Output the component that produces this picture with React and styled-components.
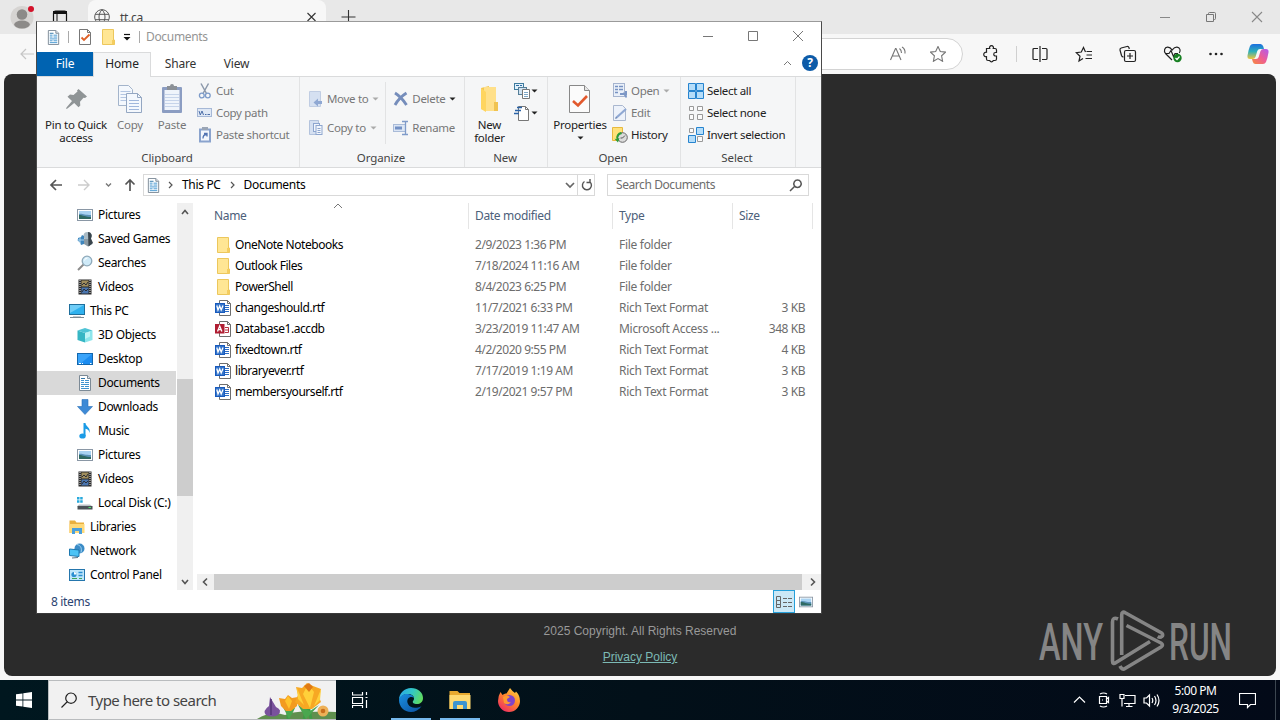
import styled, { createGlobalStyle, css } from "styled-components";

const GlobalStyle = createGlobalStyle`
  * {
    box-sizing: border-box;
  }
  body {
    margin: 0;
    overflow: hidden;
    font-family: "Noto Sans", "Open Sans", sans-serif;
    font-size: 12px;
    color: #000;
  }
  svg {
    display: block;
    flex: none;
  }
`;

/* ---------- icons ---------- */

const icons = {
  picture: (
    <>
      <rect x="0.5" y="2.5" width="15" height="11" fill="#fff" stroke="#8a97a5" />
      <rect x="2" y="4" width="12" height="8" fill="#a9d3f2" />
      <path d="M2 7c3-1 5 1 12 1v4H2z" fill="#5c93b8" />
      <path d="M2 8c4 0 6 2 12 2v2H2z" fill="#2f6a62" />
    </>
  ),
  games: (
    <>
      <circle cx="10.5" cy="5" r="4" fill="#a9bac4" />
      <path d="M7 8h6l2.500 5-4.500 2.500-4-2.500z" fill="#8a9aa4" />
      <path d="M11 1a4 4 0 0 1 3 6.500L16 12l-4.500 3.500z" fill="#39454d" />
      <path d="M1 7l3-1 1-2 2 1v8l-3 1-1-3-2-1z" fill="#3f86bd" />
      <path d="M0 9h7M3 6v6" stroke="#a7d0ec" />
    </>
  ),
  search: (
    <>
      <path d="M1 15l5.500-5.500" stroke="#8c8c8c" strokeWidth="2" />
      <circle cx="10" cy="6" r="4.800" fill="#cfeaf8" stroke="#8fa9ba" strokeWidth="1.300" />
      <path d="M7.500 5.500a3 3 0 0 1 3-2.500" stroke="#fff" fill="none" />
    </>
  ),
  video: (
    <>
      <rect x="1.500" y="0.500" width="13" height="15" fill="#2b2b2b" />
      <path d="M3 1v14M13 1v14" stroke="#eee" strokeDasharray="1 1" />
      <rect x="4.500" y="1.500" width="7" height="6" fill="#a08d5c" />
      <rect x="4.500" y="8.500" width="7" height="6" fill="#4a76b0" />
      <path d="M5 6l2-2 2 2 2-3M5 13l2-3 2 2 2-2" stroke="#2b2f38" fill="none" />
    </>
  ),
  pc: (
    <>
      <rect x="0.500" y="1.500" width="15" height="10" fill="#2fb1ee" stroke="#1f6f9c" />
      <path d="M1 2h14L1 10z" fill="#6fcdf7" />
      <path d="M4 13.500h8" stroke="#c3cbd1" />
      <path d="M1 14.500h14" stroke="#7d8a93" />
    </>
  ),
  cube: (
    <>
      <path d="M0.500 3.500L8 6v9.500L0.500 13z" fill="#36b6c4" />
      <path d="M8 6l7.500-2.500V13L8 15.500z" fill="#8de6ec" />
      <path d="M0.500 3.500L8 1l7.500 2.500L8 6z" fill="#4fc4d6" />
      <path d="M8 6l5-1.600v5L8 12z" fill="#c0f5f7" />
    </>
  ),
  desktop: (
    <>
      <rect x="0.500" y="2.500" width="15" height="11" fill="#1b8cf0" stroke="#1367ad" />
      <path d="M1 3h14L3 13H1z" fill="#3aa4fa" />
      <path d="M2 12.500h2M5 12.500h1M13 12.500h1.500" stroke="#fff" />
    </>
  ),
  document: (
    <>
      <path d="M2.500 0.500h8l3 3v12h-11z" fill="#fff" stroke="#7c8a96" />
      <path d="M10.500 0.500v3h3" fill="#dfe6ec" stroke="#7c8a96" />
      <path d="M4 5.500h3M8 5.500h4M4 7.500h3M8 7.500h4M4 9.500h8M4 11.500h3M8 11.500h4M4 13.500h8" stroke="#3f93cf" />
      <path d="M4 3.500h4" stroke="#2f75a8" />
    </>
  ),
  download: <path d="M5 0.500h6v7h4.500L8 15.500 0.500 7.500H5z" fill="#3d8ad6" stroke="#2a70b8" strokeWidth="0.600" />,
  music: (
    <>
      <path d="M6.500 0h2c0 3.500 5.500 4.500 4 10-.3-2.800-1.800-4-4-4.300V13h-2z" fill="#1a9be6" />
      <ellipse cx="5.500" cy="13" rx="3.200" ry="2.600" fill="#1a9be6" />
    </>
  ),
  disk: (
    <>
      <path d="M0 2h2.500v2.500H0zM3.200 2h2.500v2.500H3.200zM0 5.200h2.500v2.500H0zM3.200 5.200h2.500v2.500H3.200z" fill="#27a9dc" />
      <path d="M2 9.500h11l2.500 2H0z" fill="#b9c0c5" />
      <rect x="0.500" y="11" width="15" height="3.500" fill="#4b5257" />
      <rect x="11.500" y="12" width="2.500" height="1" fill="#4fe36a" />
    </>
  ),
  libraries: (
    <>
      <path d="M0.500 1.500h5.500l1.500 2h7.500V14H0.500z" fill="#e9b03f" />
      <rect x="0.500" y="5" width="15" height="9" fill="#ffd978" />
      <path d="M3 15V9h10v6h-3v-3H6v3z" fill="#4a9fdb" />
    </>
  ),
  network: (
    <>
      <circle cx="10.500" cy="5.500" r="5" fill="#3b8cc7" />
      <path d="M8 1.500c4 1 5 4 4 8" stroke="#a7d6f1" fill="none" />
      <path d="M0.500 6l9.500 1v6.500l-9.500-1z" fill="#4cc3f5" stroke="#1c78b0" />
      <path d="M3 15l6-.5" stroke="#5b7486" />
    </>
  ),
  control: (
    <>
      <rect x="0.500" y="2.500" width="15" height="11" fill="#bfe6fb" stroke="#2576ad" />
      <circle cx="5" cy="7.500" r="2.600" fill="#2c8fd1" />
      <path d="M5 7.500V4.900a2.600 2.600 0 0 1 2.600 2.600z" fill="#fff" />
      <path d="M9.500 5.500h4M9.500 8.500h4" stroke="#2c8fd1" strokeWidth="1.500" />
      <path d="M3 11.500h5M10 11.500h3" stroke="#41a35a" />
    </>
  ),
  folder: (
    <>
      <path d="M2.500 0.500h11v10.500h1v4.500h-12z" fill="#ffe694" stroke="#ecc75c" />
      <path d="M12 11h2.500v4.500H12z" fill="#f5cd5f" />
    </>
  ),
  word: (
    <>
      <path d="M4.500 0.500h8l3 3v12h-11z" fill="#fff" stroke="#6e6e6e" />
      <path d="M12.500 0.500v3h3" fill="none" stroke="#6e6e6e" />
      <path d="M10 5.500h4M10 7.500h4M10 9.500h4M10 11.500h4" stroke="#2b6cc4" />
      <rect x="0.500" y="3.500" width="9" height="9" fill="#3474c9" stroke="#185abd" />
      <path d="M1.800 5.500l1.200 4.500 1.700-4 1.500 4L8 5.500" stroke="#fff" fill="none" strokeWidth="1.300" />
    </>
  ),
  access: (
    <>
      <path d="M4.500 0.500h8l3 3v12h-11z" fill="#fff" stroke="#6e6e6e" />
      <path d="M12.500 0.500v3h3" fill="none" stroke="#6e6e6e" />
      <path d="M10 6.500h3.500v5H10M10 9h3" stroke="#b5303f" fill="none" />
      <rect x="0" y="3" width="9.500" height="9.500" fill="#b01e33" />
      <path d="M2.500 10.500l2.200-5.500 2.200 5.500M3.300 8.700h3" stroke="#fff" fill="none" strokeWidth="1.300" />
    </>
  ),
  check: (
    <>
      <path d="M2.500 0.500h8l3 3v12h-11z" fill="#fff" stroke="#777" />
      <path d="M10.500 0.500v3h3" fill="none" stroke="#777" />
      <path d="M4.500 8.500L7 11l5.500-5.500" stroke="#df6128" fill="none" strokeWidth="1.800" />
    </>
  ),
  cut: (
    <>
      <path d="M4 0.500l5.500 10M11.500 0.500L6 10.500" stroke="#8c99ab" strokeWidth="1.500" />
      <circle cx="4.800" cy="12.500" r="2.400" fill="none" stroke="#7d9bc9" strokeWidth="1.300" />
      <circle cx="10.800" cy="12.500" r="2.400" fill="none" stroke="#7d9bc9" strokeWidth="1.300" />
    </>
  ),
  copyPath: (
    <>
      <rect x="0.500" y="3.500" width="14" height="8" fill="#dfe8f5" stroke="#a6b8d6" />
      <path d="M2 6l1.300 4L5 6l1.500 4M8 9.500h1.500M10.500 9.500H13" stroke="#4c6ea8" fill="none" />
    </>
  ),
  pasteLink: (
    <>
      <rect x="2" y="1.500" width="12" height="14" fill="#8aa3cd" />
      <rect x="4" y="3.500" width="8" height="10" fill="#f4f7fd" />
      <rect x="5" y="0" width="6" height="3" fill="#9aa5b5" />
      <path d="M6 11.500c0-3 1-4 3.500-4M7 6.500h3v3" stroke="#5374b3" fill="none" strokeWidth="1.300" />
    </>
  ),
  moveTo: (
    <>
      <path d="M1.500 0.500h11v15h-11z" fill="#d5e0f1" stroke="#c0cde3" />
      <path d="M14 10h-4V7.500L5.500 11.500l4.500 4V13h4z" fill="#8fa8d3" />
    </>
  ),
  copyTo: (
    <>
      <path d="M1.500 0.500h9v14h-9z" fill="#d5e0f1" stroke="#b3c3dd" />
      <rect x="5.500" y="3.500" width="6" height="8" fill="#f2f6fc" stroke="#8ea6cf" />
      <rect x="8" y="5.500" width="6" height="9" fill="#f2f6fc" stroke="#8ea6cf" />
      <path d="M9.500 8.500h3M9.500 10.500h3M9.500 12.500h3" stroke="#8ea6cf" />
    </>
  ),
  remove: <path d="M2 2c4 2.500 8 6.500 11.500 12M13.500 2c-4 2.500-8.500 6.500-11.500 12" stroke="#758dbb" strokeWidth="2.800" fill="none" />,
  rename: (
    <>
      <rect x="0.500" y="4.500" width="12" height="7" fill="#dbe5f4" stroke="#a9bbd8" />
      <rect x="2" y="6.500" width="7" height="3" fill="#7391c5" />
      <path d="M9 1.500h6M12.500 1.500v13M9 14.500h6" stroke="#7f9bc9" strokeWidth="1.300" />
    </>
  ),
  easyAccess: (
    <>
      <rect x="0.500" y="0.500" width="9" height="6" fill="#e3f1fb" stroke="#3f7c9f" />
      <path d="M2 2.500h3M6 2.500h2" stroke="#2d6ea5" />
      <rect x="4.500" y="4.500" width="8" height="7" fill="#cfe2f1" stroke="#557e98" />
      <path d="M8.500 6.500h7v9h-7z" fill="#fff" stroke="#777" />
      <path d="M10 9.500h4M10 11.500h4M10 13.500h4" stroke="#7ea7c6" />
    </>
  ),
  newItem: (
    <>
      <path d="M4.500 1.500h7l3 3v11h-10z" fill="#fff" stroke="#777" />
      <path d="M11.500 1.500v3h3" fill="none" stroke="#777" />
      <path d="M3 2.500h5M1 5.500h6M0 8.500h5" stroke="#2a63a7" strokeWidth="1.400" />
    </>
  ),
  open: (
    <>
      <rect x="1.500" y="0.500" width="11" height="13" fill="#eaf0f9" stroke="#a5b4cf" />
      <path d="M3 3.500h3M7 3.500h4M3 6.500h3M7 6.500h4M3 9.500h3" stroke="#7792c2" strokeWidth="1.500" />
      <path d="M14 14.500c0-3-1.500-4-3-4M8 11h6v-3" stroke="#7c97c6" strokeWidth="2" fill="none" />
    </>
  ),
  edit: (
    <>
      <path d="M1.500 0.500h9l3 3v12h-12z" fill="#edf2fa" stroke="#a9b7cf" />
      <path d="M4 13L14 4" stroke="#8fa8d3" strokeWidth="2.200" />
      <path d="M3 14l1-2 1 1z" fill="#58709b" />
    </>
  ),
  history: (
    <>
      <path d="M0.500 0.500h10v13h-10z" fill="#ffe17a" stroke="#e7b93e" />
      <circle cx="10.500" cy="10.500" r="4.800" fill="#dcdcdc" stroke="#686868" />
      <path d="M10.500 11l2.500-2.500M10.500 11H8.500" stroke="#555" />
      <path d="M9 5a5.500 5.500 0 0 0-4.500 7l-2-.2 3.500 3.700 1.500-4.500-1.500.5C6.500 8 8 7.500 10 7z" fill="#2b9c3a" />
    </>
  ),
  selectAll: (
    <path
      d="M0.500 0.500h7v7h-7zM8.500 0.500h7v7h-7zM0.500 8.500h7v7h-7zM8.500 8.500h7v7h-7z"
      fill="#b5ddf9"
      stroke="#2684cf"
    />
  ),
  selectNone: <path d="M1.500 1.500h4v4h-4zM9.500 1.500h5v4h-5zM1.500 9.500h4v5h-4zM9.500 9.500h5v5h-5z" fill="#fbfbfb" stroke="#999" />,
  invert: (
    <>
      <path d="M1.500 1.500h4v4h-4zM9.500 9.500h5v5h-5z" fill="#fbfbfb" stroke="#999" />
      <path d="M8.500 0.500h7v7h-7zM0.500 8.500h7v7h-7z" fill="#b5ddf9" stroke="#2684cf" />
    </>
  ),
};

const Icon = ({ name, size = 16 }) => (
  <svg width={size} height={size} viewBox="0 0 16 16" fill="none">
    {icons[name]}
  </svg>
);

const Stroke = ({ d, w = 16, h = w, color = "#555", width = 1.2, children }) => (
  <svg width={w} height={h} viewBox={`0 0 ${w} ${h}`} fill="none" stroke={color} strokeWidth={width}>
    <path d={d} />
    {children}
  </svg>
);

const Caret = ({ color = "#222" }) => (
  <svg width="7" height="4" viewBox="0 0 7 4">
    <path d="M0.500 0.500h6L3.500 3.500z" fill={color} />
  </svg>
);

const PinIcon = () => (
  <svg width="24" height="24" viewBox="0 0 24 24" fill="#8f9496">
    <path d="M14.500 2L23 9.500l-2 1.500-1.500-.3-3.500 4 .3 3.800-1.800 1.800-4.300-4.300L3.500 21.500 2 22 2.500 20.500l5.500-6.500L3.500 9.800 6 7.500l3.500.6L13.500 4.500 13 3.500z" />
  </svg>
);

const CopyIcon = () => (
  <svg width="26" height="32" viewBox="0 0 26 32" fill="none">
    <path d="M1.500 2.500h10l4 4v16h-14z" fill="#f4f8fd" stroke="#a3b4cb" />
    <path d="M3.500 8.500h10M3.500 11.500h10M3.500 14.500h10M3.500 17.500h10" stroke="#b4c6e2" />
    <path d="M9.500 10.500h11l4 4v15h-15z" fill="#f4f8fd" stroke="#94a7c2" />
    <path d="M20.500 10.500v4h4" stroke="#94a7c2" />
    <path d="M12 17.500h10M12 20.500h10M12 23.500h10M12 26.500h10" stroke="#a0b7dc" />
  </svg>
);

const PasteIcon = () => (
  <svg width="24" height="32" viewBox="0 0 24 32" fill="none">
    <rect x="2" y="4" width="20" height="26" rx="1" fill="#8b9dc2" />
    <rect x="4.500" y="7" width="15" height="20" fill="#eff4fb" />
    <path d="M5 11.500h14M5 14.500h14M5 17.500h14M5 20.500h14M5 23.500h14" stroke="#c6d4ea" />
    <path d="M7 3h3a2 2 0 0 1 4 0h3v4H7z" fill="#8b9096" />
  </svg>
);

const NewFolderIcon = () => (
  <svg width="20" height="28" viewBox="0 0 20 28">
    <path d="M1 3l8-2v25l-8-2z" fill="#f2c750" />
    <path d="M4 2h12v15l2 2v7H4z" fill="#ffe08a" />
    <path d="M1 3l5 4v20l-5-3z" fill="#ffd55f" />
    <path d="M14 17h4v9h-4z" fill="#f0c351" />
  </svg>
);

const PropertiesIcon = () => (
  <svg width="22" height="30" viewBox="0 0 22 30" fill="none">
    <path d="M0.500 1.500h15l5 5v22h-20z" fill="#fbfbfb" stroke="#888" />
    <path d="M15.500 1.500v5h5" fill="#e6e6e6" stroke="#888" />
    <path d="M4 17l5 4.500L18 12" stroke="#e2592d" strokeWidth="2.600" />
  </svg>
);

/* ---------- browser ---------- */

const Screen = styled.div`
  position: relative;
  width: 1280px;
  height: 720px;
  display: flex;
  flex-direction: column;
  overflow: hidden;
  background: #f7f7f7;
`;

const TabStrip = styled.div`
  height: 34px;
  display: flex;
  align-items: center;
  background: #e8e8e8;
`;

const Profile = styled.div`
  width: 52px;
  padding-left: 10px;
`;

const BrowserTab = styled.div`
  width: 238px;
  height: 34px;
  margin-left: 20px;
  padding: 0 7px 0 6px;
  display: flex;
  align-items: center;
  gap: 10px;
  border-radius: 8px 8px 0 0;
  background: #f7f7f7;
  color: #444;
  letter-spacing: -0.3px;
  span {
    flex: 1;
  }
`;

const WindowButtons = styled.div`
  margin-left: auto;
  display: flex;
  gap: 30px;
  padding-right: 15px;
`;

const Toolbar = styled.div`
  height: 40px;
  display: flex;
  align-items: center;
  padding: 0 2px 0 18px;
`;

const UrlBar = styled.div`
  width: 901px;
  height: 32px;
  margin-left: 28px;
  padding-right: 16px;
  display: flex;
  align-items: center;
  justify-content: flex-end;
  gap: 23px;
  border: 1px solid #d3d3d3;
  border-radius: 16px;
  background: #fff;
`;

const ToolbarIcons = styled.div`
  margin-left: auto;
  display: grid;
  grid-template-columns: 26px 14px repeat(5, 44px) 40px;
  place-items: center;
`;

const ToolbarLine = styled.i`
  width: 1px;
  height: 16px;
  margin-left: 10px;
  background: #d0d0d0;
`;

const Page = styled.main`
  height: 602px;
  margin: 0 4px 4px;
  padding-bottom: 11px;
  display: flex;
  flex-direction: column;
  justify-content: flex-end;
  align-items: center;
  gap: 10px;
  border-radius: 8px;
  background: #2b2b2b;
  color: #999;
  font: 12px/16px "Liberation Sans", Arial, sans-serif;
  a {
    color: #7cbab5;
    text-decoration: underline;
  }
`;

const Watermark = styled.div`
  position: absolute;
  left: 1036px;
  top: 608px;
`;

/* ---------- explorer ---------- */

const Explorer = styled.section`
  position: absolute;
  left: 36px;
  top: 21px;
  width: 786px;
  height: 593px;
  display: flex;
  flex-direction: column;
  border: 1px solid;
  border-color: #9a9a9a #4a4a4a #3a3a3a;
  background: #fff;
  letter-spacing: -0.33px;
  line-height: 16px;
  white-space: nowrap;
`;

const TitleBar = styled.header`
  height: 30px;
  padding: 0 17px 0 9px;
  display: flex;
  align-items: center;
  color: #959595;
`;

const QuickAccess = styled.div`
  display: flex;
  align-items: center;
  gap: 7px;
  margin-right: 5px;
`;

const Rule = styled.i`
  width: 1px;
  height: 12px;
  margin-right: 1px;
  background: #aaa;
`;

const CaptionButtons = styled.div`
  margin: 0 0 4px auto;
  display: flex;
  gap: 33px;
`;

const Tabs = styled.nav`
  height: 25px;
  display: flex;
  align-items: stretch;
  border-bottom: 1px solid #dadbdc;
`;

const Tab = styled.div`
  width: ${({ $width }) => $width}px;
  display: flex;
  align-items: center;
  justify-content: center;
  color: #333;
  letter-spacing: -0.15px;
  ${({ $kind }) =>
    $kind === "file" &&
    css`
      background: #0063b1;
      color: #fff;
    `}
  ${({ $kind }) =>
    $kind === "active" &&
    css`
      margin-bottom: -1px;
      padding-bottom: 2px;
      border: 1px solid #dadbdc;
      border-bottom: 0;
      background: #f5f6f7;
      color: #222;
    `}
`;

const TabsEnd = styled.div`
  margin-left: auto;
  padding: 0 3px 2px 0;
  display: flex;
  align-items: center;
  gap: 10px;
`;

const HelpBadge = styled.span`
  width: 16px;
  height: 16px;
  border-radius: 50%;
  background: #0d5ba8;
  color: #fff;
  font-weight: 700;
  text-align: center;
`;

const Ribbon = styled.div`
  height: 91px;
  display: flex;
  border-bottom: 1px solid #dadbdc;
  background: #f5f6f7;
  font-size: 11.5px;
  letter-spacing: -0.32px;
`;

const Group = styled.div`
  width: ${({ $width }) => $width}px;
  padding: 3px 0 1px;
  display: flex;
  flex-direction: column;
  border-right: 1px solid #e2e3e4;
`;

const GroupBody = styled.div`
  flex: 1;
  display: flex;
  padding-left: ${({ $pad }) => $pad || 0}px;
`;

const GroupName = styled.div`
  padding-right: 2px;
  text-align: center;
  color: #444;
  letter-spacing: -0.1px;
`;

const BigButton = styled.div`
  width: ${({ $width }) => $width}px;
  padding-top: 2px;
  display: flex;
  flex-direction: column;
  align-items: center;
  color: ${({ $disabled }) => ($disabled ? "#777" : "#222")};
  line-height: 13px;
  letter-spacing: -0.25px;
  text-align: center;
  white-space: pre;
  .pic {
    height: 33px;
    margin-bottom: 3px;
    display: flex;
    align-items: center;
  }
  span + svg {
    margin-top: 5px;
  }
`;

const Commands = styled.div`
  display: flex;
  flex-direction: column;
  padding: ${({ $top }) => $top || 0}px 0 0 ${({ $left }) => $left || 0}px;
`;

const Command = styled.div`
  height: ${({ $height }) => $height || 22}px;
  display: flex;
  align-items: center;
  gap: 3px;
  color: ${({ $disabled }) => ($disabled ? "#777" : "#222")};
  svg + svg {
    margin-left: ${({ $tight }) => ($tight ? -2 : 1)}px;
  }
`;

const Separator = styled.i`
  width: 1px;
  height: 62px;
  margin: 2px 7px 0 6px;
  background: #e2e3e4;
`;

const AddressRow = styled.div`
  height: 35px;
  padding: 0 12px 1px;
  display: flex;
  align-items: center;
`;

const NavArrows = styled.div`
  width: 94px;
  display: flex;
  align-items: center;
  gap: 14px;
  svg:last-child {
    margin-left: -2px;
  }
`;

const Box = styled.div`
  width: ${({ $width }) => $width}px;
  height: 22px;
  padding: 0 5px 0 2px;
  display: flex;
  align-items: center;
  gap: 9px;
  border: 1px solid #d9d9d9;
  svg:first-child {
    margin-right: -2px;
  }
  &:last-child {
    margin-left: 12px;
    padding: 0 6px 0 8px;
    justify-content: space-between;
    color: #6d6d6d;
    letter-spacing: -0.42px;
  }
`;

const BoxEnd = styled.div`
  height: 20px;
  margin: 0 -5px 0 auto;
  display: flex;
  align-items: center;
  gap: 2px;
  svg:first-child {
    margin-right: 0;
  }
  i {
    width: 1px;
    height: 20px;
    background: #d9d9d9;
  }
`;

const Body = styled.div`
  height: 387px;
  display: flex;
`;

const Tree = styled.ul`
  width: 139px;
  margin: 0;
  padding: 0;
  list-style: none;
`;

const TreeItem = styled.li`
  height: 24px;
  padding-left: ${({ $level }) => 24 + $level * 8}px;
  display: flex;
  align-items: center;
  gap: 5px;
  background: ${({ $selected }) => ($selected ? "#d9d9d9" : "none")};
`;

const VerticalScroll = styled.div`
  width: 16px;
  margin-left: 1px;
  padding-top: 6px;
  display: flex;
  flex-direction: column;
  align-items: center;
  background: #f0f0f0;
  i {
    width: 16px;
    height: 117px;
    margin: 164px 0 83px;
    background: #cdcdcd;
  }
`;

const Files = styled.div`
  flex: 1;
  margin-left: 4px;
  display: flex;
  flex-direction: column;
`;

const columns = css`
  display: grid;
  grid-template-columns: 272px 144px 120px 80px;
  align-items: center;
`;

const HeaderRow = styled.div`
  ${columns}
  height: 26px;
  margin-bottom: 5px;
  color: #4c607a;
  > div {
    position: relative;
    height: 26px;
    padding-left: 6px;
    line-height: 26px;
    border-right: 1px solid #e5e5e5;
  }
  > div:first-child {
    padding-left: 17px;
  }
`;

const SortMark = styled.span`
  position: absolute;
  left: 136px;
  top: 0;
`;

const FileRow = styled.div`
  ${columns}
  height: 21px;
  color: #6d6d6d;
  letter-spacing: -0.45px;
  > span {
    padding-left: 6px;
  }
  > span:last-child {
    padding-right: 8px;
    text-align: right;
  }
`;

const FileType = styled.span`
  letter-spacing: -0.3px;
`;

const FileName = styled.div`
  padding-left: 18px;
  display: flex;
  align-items: center;
  gap: 4px;
  color: #000;
`;

const HorizontalScroll = styled.div`
  height: 16px;
  margin-top: auto;
  display: flex;
  align-items: center;
  background: #f0f0f0;
  i {
    width: 588px;
    height: 16px;
    margin: 0 7px 0 5px;
    background: #cdcdcd;
  }
`;

const StatusBar = styled.footer`
  height: 23px;
  padding: 0 4px 0 14px;
  display: flex;
  align-items: center;
  justify-content: space-between;
  color: #2b4371;
`;

const ViewButtons = styled.div`
  display: flex;
`;

const ViewButton = styled.div`
  width: 22px;
  height: 23px;
  display: grid;
  place-items: center;
  border: 1px solid ${({ $active }) => ($active ? "#26a0da" : "transparent")};
  background: ${({ $active }) => ($active ? "#cbe8f6" : "none")};
`;

/* ---------- taskbar ---------- */

const Taskbar = styled.div`
  height: 40px;
  display: flex;
  background: linear-gradient(90deg, #00171f, #021019 50%, #030a18);
  color: #fff;
`;

const TaskButton = styled.div`
  width: ${({ $width }) => $width}px;
  display: grid;
  place-items: center;
  position: relative;
  &::after {
    content: "";
    position: absolute;
    bottom: 0;
    width: 40px;
    height: 2px;
    background: ${({ $running }) => ($running ? "#76b9ed" : "none")};
  }
`;

const SearchBox = styled.div`
  width: 288px;
  padding-left: 12px;
  display: flex;
  align-items: center;
  border: 1px solid #b9bcbe;
  border-right: 0;
  background: #f1f1f1;
  color: #444;
  font-size: 15px;
  letter-spacing: -0.52px;
  span {
    flex: 1;
    margin-left: 11px;
  }
`;

const Tray = styled.div`
  margin-left: auto;
  display: flex;
  align-items: center;
  gap: 7px;
`;

const Clock = styled.div`
  width: 57px;
  margin-right: 8px;
  font-size: 12px;
  line-height: 18px;
  letter-spacing: -0.45px;
  text-align: center;
  white-space: nowrap;
`;

const DesktopEdge = styled.i`
  width: 5px;
  height: 40px;
  margin-left: 12px;
  border-left: 1px solid #3c4650;
`;

const tree = [
  ["picture", "Pictures", 2],
  ["games", "Saved Games", 2],
  ["search", "Searches", 2],
  ["video", "Videos", 2],
  ["pc", "This PC", 1],
  ["cube", "3D Objects", 2],
  ["desktop", "Desktop", 2],
  ["document", "Documents", 2, true],
  ["download", "Downloads", 2],
  ["music", "Music", 2],
  ["picture", "Pictures", 2],
  ["video", "Videos", 2],
  ["disk", "Local Disk (C:)", 2],
  ["libraries", "Libraries", 1],
  ["network", "Network", 1],
  ["control", "Control Panel", 1],
];

const files = [
  ["folder", "OneNote Notebooks", "2/9/2023 1:36 PM", "File folder", ""],
  ["folder", "Outlook Files", "7/18/2024 11:16 AM", "File folder", ""],
  ["folder", "PowerShell", "8/4/2023 6:25 PM", "File folder", ""],
  ["word", "changeshould.rtf", "11/7/2021 6:33 PM", "Rich Text Format", "3 KB"],
  ["access", "Database1.accdb", "3/23/2019 11:47 AM", "Microsoft Access ...", "348 KB"],
  ["word", "fixedtown.rtf", "4/2/2020 9:55 PM", "Rich Text Format", "4 KB"],
  ["word", "libraryever.rtf", "7/17/2019 1:19 AM", "Rich Text Format", "3 KB"],
  ["word", "membersyourself.rtf", "2/19/2021 9:57 PM", "Rich Text Format", "3 KB"],
];

const star = "M8 0.500l2.300 5 5.200.6-3.900 3.700 1 5.500L8 12.600l-4.600 2.700 1-5.500L.5 6.100l5.200-.6z";

const Browser = () => (
  <>
    <TabStrip>
      <Profile>
        <svg width="26" height="26" viewBox="0 0 26 26">
          <circle cx="12" cy="13.500" r="11.500" fill="#d6d4d2" />
          <circle cx="12" cy="10.500" r="5.300" fill="#8c8a88" />
          <ellipse cx="12" cy="20.500" rx="7.800" ry="4" fill="#8c8a88" />
          <circle cx="21" cy="5" r="3" fill="#d3122a" />
        </svg>
      </Profile>
      <svg width="16" height="16" viewBox="0 0 16 16" fill="none" stroke="#111">
        <rect x="1.500" y="2" width="13" height="13" rx="2" strokeWidth="1.200" />
        <path d="M1 3.500h14" strokeWidth="3" />
        <path d="M5 4v11" />
      </svg>
      <BrowserTab>
        <Stroke d="M8 .7a7.300 7.300 0 1 0 .01 0zM8 .7c-4 4-4 10.600 0 14.600M8 .7c4 4 4 10.600 0 14.600M1.300 5.300h13.400M1.300 10.700h13.400" color="#555" width={1} />
        <span>tt.ca</span>
        <Stroke w={14} d="M2.500 3l8 8M10.500 3l-8 8" color="#333" width={1.100} />
      </BrowserTab>
      <Stroke w={45} h={16} d="M22.500 1v14M15.500 8h14" color="#333" width={1.100} />
      <WindowButtons>
        <Stroke d="M3 8.500h10" color="#888" width={1} />
        <Stroke d="M3.500 5.500h7v7h-7zM5.500 5V4.500q0-1 1-1h5q1 0 1 1v5q0 1-1 1H11" color="#777" width={1} />
        <Stroke d="M3 3l10 10M13 3L3 13" color="#888" width={1.100} />
      </WindowButtons>
    </TabStrip>
    <Toolbar>
      <Stroke d="M17 8H3M8 3L3 8l5 5" color="#c5c5c5" />
      <UrlBar>
        <Stroke w={18} h={16} d="M1.500 14L6.500 2.500h.5L12 14M3.500 10h6.500M10.500 2.500q2 1.500 2 4.500M13 1q3.500 2 3 6.500" color="#767676" width={1.100} />
        <Stroke d={star} color="#767676" width={1.100} />
      </UrlBar>
      <ToolbarIcons>
        <Stroke
          w={18}
          color="#222"
          d="M4.500 3.500h3.200a2 2 0 1 1 3.600 0H13q1.500 0 1.500 1.500v2.500h-1a1.700 1.700 0 1 0 0 3.500h1V14q0 1.500-1.500 1.500h-1.700a1.900 1.900 0 0 1-3.600 0H6q-1.500 0-1.500-1.500v-2.300a2.300 2.300 0 1 1 0-4.500z"
        />
        <ToolbarLine />
        <Stroke w={18} h={16} color="#222" d="M7 2.500H3q-1 0-1 1v9q0 1 1 1h4M11 2.500h4q1 0 1 1v9q0 1-1 1h-4M9 0v16" />
        <Stroke w={18} color="#222" d="M10.500 7L8.500 2.500 6.300 7l-5 .7 3.700 3.500L4 16l4-2.400M11.500 6.500H17M11.500 10H17M10.500 13.500H17" />
        <Stroke w={20} h={18} color="#222" d="M5.500 12q-1.500 0-2-1.500L2 5q-.3-1.500 1.200-2L9 1.500q1.500-.3 2 1.200l.3 1.300M8 5.500h8q1.500 0 1.500 1.500v8q0 1.500-1.500 1.500H8Q6.500 16.500 6.500 15V7Q6.500 5.500 8 5.500zM12 8v6M9 11h6" />
        <Stroke w={19} h={18} color="#222" d="M9 15L2.500 8.500C.5 6 1.500 2.500 4.500 2.200 7 2 8.500 4 9.200 5 10 4 11.500 2 14 2.200c3 .3 4 3.500 2.300 5.800M2 8.500h4l2-3 2.500 6 1.500-3h3">
          <circle cx="14.500" cy="13" r="4.200" fill="#178022" stroke="none" />
          <path d="M12.500 13l1.500 1.500 2.500-3" stroke="#fff" />
        </Stroke>
        <svg width="18" height="16" viewBox="0 0 18 16" fill="#222">
          <circle cx="3.500" cy="8" r="1.300" />
          <circle cx="9" cy="8" r="1.300" />
          <circle cx="14.500" cy="8" r="1.300" />
        </svg>
        <svg width="22" height="22" viewBox="0 0 22 22">
          <defs>
            <linearGradient id="cpA" x1="0" y1="0" x2="0" y2="1">
              <stop offset="0" stopColor="#1b6fe0" />
              <stop offset="0.500" stopColor="#2fb0b8" />
              <stop offset="1" stopColor="#f2c63c" />
            </linearGradient>
            <linearGradient id="cpB" x1="1" y1="0" x2="0" y2="1">
              <stop offset="0" stopColor="#b05bf0" />
              <stop offset="0.500" stopColor="#ee5d94" />
              <stop offset="1" stopColor="#f78a3c" />
            </linearGradient>
          </defs>
          <path d="M6 1h7.500q2 0 2.800 2.500l.7 2.500h-4q-2 0-2.700 2L8.500 14q-.8 2-3 2H3q-3 0-2.500-3.500Q1.500 6.500 3 3 4 1 6 1z" fill="url(#cpA)" />
          <path d="M16 21H8.500q-2 0-2.800-2.500L5 16h4q2 0 2.700-2L13.500 8q.8-2 3-2H19q3 0 2.500 3.500Q20.500 15.500 19 19q-1 2-3 2z" fill="url(#cpB)" />
        </svg>
      </ToolbarIcons>
    </Toolbar>
    <Page>
      <div>2025 Copyright. All Rights Reserved</div>
      <a>Privacy Policy</a>
    </Page>
    <Watermark>
      <svg width="242" height="66" viewBox="0 0 242 66" fill="none" stroke="#858585" strokeWidth="3.600" strokeLinejoin="round">
        <g fill="#858585" stroke="none" fontFamily="Roboto" fontWeight="500" fontSize="51">
          <text x="3" y="51.500" textLength="64" lengthAdjust="spacingAndGlyphs">ANY</text>
          <text x="133" y="51.500" textLength="63" lengthAdjust="spacingAndGlyphs">RUN</text>
        </g>
        <path d="M82 11q-5.500-2.500-5.500 3v39q0 4 3.500 1.500l34-21" />
        <path d="M85.700 47V7q0-4.500 4-2l36 20q2 2 0 3.500-1.500 1.500-4 0" />
        <path d="M90.500 17.500L125 35q3 2 0 4L89 60.500q-3 2-5-2.500" />
      </svg>
    </Watermark>
  </>
);

const ExplorerWindow = () => (
  <Explorer>
    <TitleBar>
      <QuickAccess>
        <Icon name="document" size={15} />
        <Rule />
        <Icon name="check" />
        <Icon name="folder" />
        <Stroke w={9} h={8} d="M1 1.500h6" color="#111"><path d="M0.500 4h7L4 7.500z" fill="#111" stroke="none" /></Stroke>
        <Rule />
      </QuickAccess>
      Documents
      <CaptionButtons>
        <Stroke w={12} h={14} d="M1 8.500h10" color="#777" width={1} />
        <Stroke w={12} h={14} d="M1.500 3.500h9v9h-9z" color="#777" width={1} />
        <Stroke w={12} h={14} d="M1 3l10 10M11 3L1 13" color="#777" width={1} />
      </CaptionButtons>
    </TitleBar>
    <Tabs>
      <Tab $width={56} $kind="file">File</Tab>
      <Tab $width={58} $kind="active">Home</Tab>
      <Tab $width={59}>Share</Tab>
      <Tab $width={53}>View</Tab>
      <TabsEnd>
        <Stroke w={9} h={8} d="M1 6l3.500-3.500L8 6" color="#777" width={1} />
        <HelpBadge>?</HelpBadge>
      </TabsEnd>
    </Tabs>
    <Ribbon>
      <Group $width={263}>
        <GroupBody $pad={4}>
          <BigButton $width={70}>
            <div className="pic"><PinIcon /></div>
            <span>{"Pin to Quick\naccess"}</span>
          </BigButton>
          <BigButton $width={38} $disabled>
            <div className="pic"><CopyIcon /></div>
            <span>Copy</span>
          </BigButton>
          <BigButton $width={46} $disabled>
            <div className="pic"><PasteIcon /></div>
            <span>Paste</span>
          </BigButton>
          <Commands $left={2}>
            <Command $disabled><Icon name="cut" />Cut</Command>
            <Command $disabled><Icon name="copyPath" />Copy path</Command>
            <Command $disabled><Icon name="pasteLink" />Paste shortcut</Command>
          </Commands>
        </GroupBody>
        <GroupName>Clipboard</GroupName>
      </Group>
      <Group $width={165}>
        <GroupBody $pad={8}>
          <Commands $top={4}>
            <Command $height={29} $disabled><Icon name="moveTo" />Move to<Caret color="#aaa" /></Command>
            <Command $height={29} $disabled><Icon name="copyTo" />Copy to<Caret color="#aaa" /></Command>
          </Commands>
          <Separator />
          <Commands $top={4}>
            <Command $height={29} $disabled><Icon name="remove" />Delete<Caret /></Command>
            <Command $height={29} $disabled><Icon name="rename" />Rename</Command>
          </Commands>
        </GroupBody>
        <GroupName>Organize</GroupName>
      </Group>
      <Group $width={83}>
        <GroupBody>
          <BigButton $width={49}>
            <div className="pic"><NewFolderIcon /></div>
            <span>{"New\nfolder"}</span>
          </BigButton>
          <Commands>
            <Command $tight><Icon name="easyAccess" /><Caret /></Command>
            <Command $tight><Icon name="newItem" /><Caret /></Command>
          </Commands>
        </GroupBody>
        <GroupName>New</GroupName>
      </Group>
      <Group $width={133}>
        <GroupBody>
          <BigButton $width={64}>
            <div className="pic"><PropertiesIcon /></div>
            <span>Properties</span>
            <Caret />
          </BigButton>
          <Commands>
            <Command $disabled><Icon name="open" />Open<Caret color="#aaa" /></Command>
            <Command $disabled><Icon name="edit" />Edit</Command>
            <Command><Icon name="history" />History</Command>
          </Commands>
        </GroupBody>
        <GroupName>Open</GroupName>
      </Group>
      <Group $width={115}>
        <GroupBody $pad={7}>
          <Commands>
            <Command><Icon name="selectAll" />Select all</Command>
            <Command><Icon name="selectNone" />Select none</Command>
            <Command><Icon name="invert" />Invert selection</Command>
          </Commands>
        </GroupBody>
        <GroupName>Select</GroupName>
      </Group>
    </Ribbon>
    <AddressRow>
      <NavArrows>
        <Stroke w={14} d="M13 7H2M7 2L2 7l5 5" color="#555" width={1.700} />
        <Stroke w={14} d="M1 7h11M7 2l5 5-5 5" color="#ccc" width={1.400} />
        <Stroke w={7} h={8} d="M1 2.500L3.500 5 6 2.500" color="#777" width={1.400} />
        <Stroke w={12} h={14} d="M6 13V2M1.500 6.500L6 2l4.500 4.500" color="#555" width={1.700} />
      </NavArrows>
      <Box $width={452}>
        <Icon name="document" size={15} />
        <Stroke w={5} h={8} d="M1 1l3 3-3 3" color="#555" />
        <span>This PC</span>
        <Stroke w={5} h={8} d="M1 1l3 3-3 3" color="#555" />
        <span>Documents</span>
        <BoxEnd>
          <Stroke w={10} h={8} d="M1 2l4 4 4-4" color="#666" width={1.700} />
          <i />
          <Stroke w={14} h={14} d="M4.500 3.500a4.500 4.500 0 1 0 5.500.5M10 1v3.500H6.500" color="#555" width={1.400} />
        </BoxEnd>
      </Box>
      <Box $width={202}>
        Search Documents
        <Stroke d="M2 14l4.500-4.500M9.500 3a3.700 3.700 0 1 0 .01 0z" color="#555" width={1.500} />
      </Box>
    </AddressRow>
    <Body>
      <Tree>
        {tree.map(([icon, name, level, selected], i) => (
          <TreeItem key={i} $level={level} $selected={selected}>
            <Icon name={icon} />
            {name}
          </TreeItem>
        ))}
      </Tree>
      <VerticalScroll>
        <Stroke w={8} h={6} d="M1 5l3-3.500L7 5" color="#555" width={1.600} />
        <i />
        <Stroke w={8} h={6} d="M1 1l3 3.500L7 1" color="#555" width={1.600} />
      </VerticalScroll>
      <Files>
        <HeaderRow>
          <div>
            Name
            <SortMark><Stroke w={10} h={6} d="M1 5l4-4 4 4" color="#777" width={1} /></SortMark>
          </div>
          <div>Date modified</div>
          <div>Type</div>
          <div>Size</div>
        </HeaderRow>
        {files.map(([icon, name, date, type, size]) => (
          <FileRow key={name}>
            <FileName>
              <Icon name={icon} />
              {name}
            </FileName>
            <span>{date}</span>
            <FileType>{type}</FileType>
            <span>{size}</span>
          </FileRow>
        ))}
        <HorizontalScroll>
          <Stroke w={12} h={10} d="M10 1.500L6.500 5 10 8.500" color="#555" width={1.600} />
          <i />
          <Stroke w={10} h={10} d="M2 1.500L5.500 5 2 8.500" color="#555" width={1.600} />
        </HorizontalScroll>
      </Files>
    </Body>
    <StatusBar>
      8 items
      <ViewButtons>
        <ViewButton $active>
          <Stroke d="M0.500 2.500h4v4h-4zM0.500 6.500h4v4h-4zM0.500 10.500h4v3h-4zM7 4.500h4M12 4.500h4M7 8.500h4M12 8.500h4M7 12.500h4M12 12.500h4" color="#666" width={1} />
        </ViewButton>
        <ViewButton><Icon name="picture" size={14} /></ViewButton>
      </ViewButtons>
    </StatusBar>
  </Explorer>
);

const Flowers = () => (
  <svg width="80" height="38" viewBox="0 0 80 38">
    <path d="M1 38q14-9 28-4 12-5 24-3 14-1 27 0v7z" fill="#5f8f4e" />
    <path d="M32 38V26M48 38l4-14 3 14" stroke="#3e9c46" strokeWidth="3" fill="none" />
    <path d="M26 24q4 8 7 14 4-6 6-11M42 24l8 14 13-14-9 6z" fill="#4aa74f" />
    <path d="M14 16l6 10q7 3 2 8-6 3-12 0-4-4 3-9z" fill="#79529c" />
    <path d="M15 18v16" stroke="#533677" strokeWidth="1.500" />
    <path d="M23 17l6 1 3-4 4 3 6-1-1 9-6 5h-5l-5-5z" fill="#f39b20" />
    <path d="M32 15l4 5-3 8-4-8z" fill="#ffc42c" />
    <path d="M40 6l6 1 5-5 6 3 8 3-2 8 2 5-9 7h-9l-8-7 3-7z" fill="#f7a823" />
    <path d="M52 3l6 8-4 16-7-14zM41 7l7 17-6-6zM65 8l-7 17 6-6z" fill="#ffd03a" />
    <path d="M48 5l5-3 4 4-4 5z" fill="#e07b16" />
    <circle cx="67" cy="30" r="5.500" fill="#eeb158" />
    <circle cx="67" cy="30" r="2.300" fill="#c96f1d" />
  </svg>
);

const TaskbarView = () => (
  <Taskbar>
    <TaskButton $width={48}>
      <svg width="16" height="16" viewBox="0 0 16 16" fill="#fff">
        <path d="M0 2.300L6.500 1.400v6.200H0zM7.300 1.300L16 0v7.600H7.300zM0 8.400h6.500v6.200L0 13.700zM7.300 8.400H16V16l-8.700-1.300z" />
      </svg>
    </TaskButton>
    <SearchBox>
      <Stroke d="M0.500 15.500L6 10M10 1a5.200 5.200 0 1 0 .01 0z" color="#222" />
      <span>Type here to search</span>
      <Flowers />
    </SearchBox>
    <TaskButton $width={48}>
      <Stroke d="M0.500 0v3h10V0M0.500 5.500h10v6H0.500zM0.500 16v-2.500h10V16M14.500 0v3M14.500 8v8M13.500 5.500h2" color="#fff" />
    </TaskButton>
    <TaskButton $width={54} $running>
      <svg width="24" height="24" viewBox="0 0 24 24">
        <defs>
          <linearGradient id="edgeTop" x1="0" x2="1" y1="0.300" y2="0.600">
            <stop offset="0" stopColor="#2aa9e8" />
            <stop offset="0.500" stopColor="#33c7c4" />
            <stop offset="1" stopColor="#62dc5c" />
          </linearGradient>
          <linearGradient id="edgeLow" x1="0" x2="1" y1="0" y2="1">
            <stop offset="0" stopColor="#1a8fe0" />
            <stop offset="1" stopColor="#0b4f9f" />
          </linearGradient>
        </defs>
        <path d="M0 12C0 5 5.500 0 12 0c7 0 12 4.500 12 10 0 4-3 6-6 6-3.500 0-4.500-1.500-4.200-2.500.5-1 1.200-1.300 1.200-3C15 8 12.500 6 9 6 4 6 1 9 0 12z" fill="url(#edgeTop)" />
        <path d="M0 12c.5-4 4.500-6.500 9-6 3 .3 5.500 2 6 4-1-1-2.200-1.300-3.500-1C8.500 9.700 7.500 13 9 16c2 4 7.500 5 13.500 2.200C20 22 16 24 12 24 5 24 0 18.500 0 12z" fill="url(#edgeLow)" />
      </svg>
    </TaskButton>
    <TaskButton $width={44} $running>
      <svg width="22" height="20" viewBox="0 0 22 20">
        <path d="M0.500 1h8l2 2H21v16H0.500z" fill="#e8a92f" />
        <rect x="0.500" y="5" width="21" height="14" fill="#ffd971" />
        <path d="M4 19v-6q0-2 2-2h10q2 0 2 2v6h-4v-4H8v4z" fill="#3e94cf" />
      </svg>
    </TaskButton>
    <TaskButton $width={54}>
      <svg width="24" height="24" viewBox="0 0 24 24">
        <defs>
          <linearGradient id="fox" x1="1" y1="0" x2="0.300" y2="1">
            <stop offset="0" stopColor="#ffe14a" />
            <stop offset="0.500" stopColor="#ff8a2a" />
            <stop offset="1" stopColor="#f0315f" />
          </linearGradient>
        </defs>
        <path d="M3.500 4l2 3q2-2 4-1.500L13 0q2 3 5 5l1-1.500q4 4 4 9.500a11 11 0 0 1-22 0q0-5 2.500-9z" fill="url(#fox)" />
        <circle cx="12.500" cy="12.500" r="5.500" fill="#8044c9" />
        <path d="M6 9q4-3 7 0l-3 2q0 4 4 3-3 4-7 1z" fill="#ff9a30" />
      </svg>
    </TaskButton>
    <Tray>
      <Stroke w={17} h={16} d="M3 10.500L8.500 5l5.500 5.500" color="#fff" />
      <Stroke w={17} h={16} color="#fff" d="M4.500 4.500h7v7h-7zM11.500 7l2-1.500v5L11.500 9M5 2q3.500-2 7 0M5 14q3.500 2 7 0M7 8h1" />
      <Stroke w={17} h={16} color="#fff" d="M6 3.500h10v8H5M10 11.500v3M7 14.500h6.500M1 2.500h4v4H1zM3 6.500v8" />
      <Stroke w={17} h={16} color="#fff" d="M1 6h2.500L6.500 3v11l-3-3H1zM9 6q1.500 2.500 0 5M11.500 4q3 4.500 0 9M14 2.500q4 6 0 12" />
      <Clock>
        5:00 PM
        <br />
        9/3/2025
      </Clock>
      <Stroke w={17} color="#fff" d="M0.500 1.500h16v11h-5l-3 3v-3h-8z" />
      <DesktopEdge />
    </Tray>
  </Taskbar>
);

const App = () => (
  <>
    <GlobalStyle />
    <Screen>
      <Browser />
      <TaskbarView />
      <ExplorerWindow />
    </Screen>
  </>
);

export default App;
